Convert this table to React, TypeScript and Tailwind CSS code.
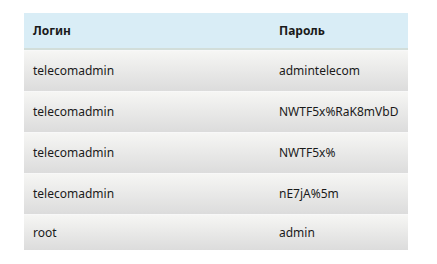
import React from "react";

const rows = [
  ["telecomadmin", "admintelecom"],
  ["telecomadmin", "NWTF5x%RaK8mVbD"],
  ["telecomadmin", "NWTF5x%"],
  ["telecomadmin", "nE7jA%5m"],
  ["root", "admin"],
];

export default function App() {
  return (
    <div
      className="w-[437px] h-[264px] bg-white pt-[13px] pl-[24px]"
      style={{ fontFamily: '"Noto Sans", "DejaVu Sans", sans-serif' }}
    >
      <div className="w-[384px] flex flex-col text-[12px] text-[#1a1a1a]">
        <div className="h-[37px] bg-[#d9edf6] border-b-2 border-[#d2deda] flex items-center font-bold">
          <div className="w-[255px] pl-[9px]">Логин</div>
          <div className="pl-0">Пароль</div>
        </div>
        {rows.map(([l, p], i) => (
          <div
            key={i}
            className={`${i === rows.length - 1 ? "h-[36px]" : "h-[41px]"} bg-gradient-to-b from-[#f6f6f4] to-[#dcdcdc] border-t border-[#f8f8f8] flex items-center`}
          >
            <div className="w-[255px] pl-[9px]">{l}</div>
            <div>{p}</div>
          </div>
        ))}
      </div>
    </div>
  );
}
